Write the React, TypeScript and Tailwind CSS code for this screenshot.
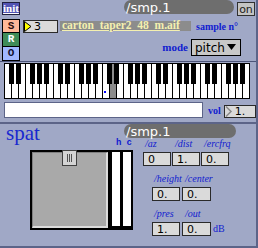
import React from "react";

const serif = { fontFamily: '"Liberation Serif", "Times New Roman", serif' };
const sans = { fontFamily: '"DejaVu Sans", "Liberation Sans", sans-serif' };
const mono = { fontFamily: '"Liberation Mono", "Courier New", monospace' };

function Keyboard() {
  const whites = Array.from({ length: 35 }, (_, i) => i);
  const blackOffsets = [5, 12, 26, 33, 40];
  const blacks: number[] = [];
  for (let o = 0; o < 5; o++) blackOffsets.forEach((b) => blacks.push(o * 49 + b));
  return (
    <svg width="246" height="36" viewBox="0 0 246 36" className="block">
      <rect x="0" y="0" width="246" height="36" fill="#ffffff" />
      <rect x="105" y="0" width="7" height="35" fill="#8c8c8c" />
      {whites.map((i) => (
        <rect key={i} x={i * 7} y="0" width="1" height="36" fill="#000" />
      ))}
      <rect x="245" y="0" width="1" height="36" fill="#000" />
      <rect x="0" y="0" width="246" height="1" fill="#000" />
      <rect x="0" y="35" width="246" height="1" fill="#000" />
      {blacks.map((x) => (
        <rect key={x} x={x} y="0" width="5" height="21" fill="#000" />
      ))}
      <rect x="100" y="28" width="2" height="2" fill="#0000ff" />
    </svg>
  );
}

function NumBox({ value, w, h = 13, arrow }: { value: string; w: number; h?: number; arrow?: "yellow" | "gray" }) {
  return (
    <div
      className="relative flex items-center border border-[#2a2a2a] bg-[#dadada] text-[11px] leading-none text-black"
      style={{ width: w, height: h, ...sans }}
    >
      {arrow === "yellow" && (
        <svg width="8" height="11" viewBox="0 0 8 11" className="absolute left-0 top-0">
          <polygon points="0.5,0.5 7,5.5 0.5,10.5" fill="#ffff00" stroke="#000" strokeWidth="1" />
        </svg>
      )}
      {arrow === "gray" && (
        <svg width="8" height="11" viewBox="0 0 8 11" className="absolute left-0 top-0">
          <polyline points="1,0.5 6,5.5 1,10.5" fill="none" stroke="#8a8a8a" strokeWidth="1.5" />
        </svg>
      )}
      <span className={arrow ? "pl-[10px]" : "pl-[4px]"}>{value}</span>
    </div>
  );
}

function Label({ children, className = "" }: { children: React.ReactNode; className?: string }) {
  return (
    <span className={`text-[10px] italic leading-none text-[#1020d0] ${className}`} style={serif}>
      {children}
    </span>
  );
}

export default function App() {
  return (
    <div className="h-[248px] w-[258px] overflow-hidden bg-[#a0a8c6]">
      {/* Top panel */}
      <div className="flex h-[124px] flex-col border-b-2 border-r-2 border-b-[#5c6488] border-r-[#5c6488]">
        <div className="flex h-[61px]">
          {/* left buttons */}
          <div className="ml-[2px] flex w-[18px] flex-col pt-[2px]">
            <div
              className="flex h-[13px] items-center justify-center border border-[#202040] bg-[#5254b4] text-[11px] font-bold leading-none text-white underline"
              style={serif}
            >
              init
            </div>
            <div className="mt-[4px] flex h-[14px] items-center justify-center border border-black bg-[#ffb898] text-[11px] font-bold leading-none text-[#301010]" style={mono}>
              S
            </div>
            <div className="flex h-[14px] items-center justify-center border border-black border-t-0 bg-[#3f8c58] text-[11px] font-bold leading-none text-white" style={mono}>
              R
            </div>
            <div className="flex h-[14px] items-center justify-center border border-black border-t-0 bg-[#a0b8ff] text-[11px] font-bold leading-none text-[#101030]" style={mono}>
              O
            </div>
          </div>
          {/* right content */}
          <div className="flex flex-1 flex-col">
            <div className="flex h-[17px] justify-end pr-[1px]">
              <div
                className="flex h-[14px] w-[110px] items-center rounded-[7px] bg-[#6e6e6e] pl-[2px] text-[13px] leading-none text-white"
                style={sans}
              >
                /smp.1
              </div>
              <div
                className="ml-[3px] mt-[2px] flex h-[14px] w-[18px] items-center justify-center border border-[#303030] bg-[#c4c4c4] text-[11px] leading-none text-[#202020]"
                style={sans}
              >
                on
              </div>
            </div>
            <div className="mt-[3px] flex items-start">
              <div className="ml-[3px]">
                <NumBox value="3" w={35} arrow="yellow" />
              </div>
              <div
                className="ml-[2px] mt-[1px] flex h-[10px] w-[131px] items-center overflow-visible whitespace-nowrap bg-[#8c8c8c] pl-[2px] text-[11.5px] font-bold leading-none text-[#f4f0b0] underline"
                style={serif}
              >
                carton_taper2_48_m.aif
              </div>
              <span className="ml-[5px] mt-[2px] text-[10px] font-bold leading-none text-[#1020d0]" style={serif}>
                sample n°
              </span>
            </div>
            <div className="mt-[6px] flex items-center justify-end pr-[15px]">
              <span className="mr-[3px] text-[11px] font-bold leading-none text-[#1020d0]" style={serif}>
                mode
              </span>
              <div
                className="relative flex h-[17px] w-[50px] items-center border border-black bg-[#c8c8c8] pl-[3px] text-[12px] leading-none text-black"
                style={sans}
              >
                pitch
                <svg width="9" height="6" viewBox="0 0 9 6" className="absolute right-[4px] top-[4px]">
                  <polygon points="0,0 9,0 4.5,6" fill="#000" />
                </svg>
              </div>
            </div>
          </div>
        </div>
        <div className="h-[1px] bg-[#4c5478]" />
        <div className="ml-[4px] mt-[1px]">
          <Keyboard />
        </div>
        <div className="mt-[3px] flex items-end">
          <div className="ml-[4px] h-[16px] w-[199px] border border-[#5c6488] bg-white" />
          <span className="mb-[2px] ml-[5px] text-[10px] font-bold leading-none text-[#1020d0]" style={serif}>
            vol
          </span>
          <div className="ml-[3px]">
            <NumBox value="1." w={32} arrow="gray" />
          </div>
        </div>
      </div>

      {/* Bottom panel */}
      <div className="flex h-[124px] flex-col border-b-2 border-r-2 border-b-[#5c6488] border-r-[#5c6488]">
        <div className="flex h-[15px] items-start">
          <span className="ml-[6px] mt-[-1px] text-[21px] leading-[21px] text-[#1828d0]" style={serif}>
            spat
          </span>
          <div
            className="ml-auto mr-[20px] flex h-[14px] w-[112px] items-center rounded-[7px] bg-[#6e6e6e] pl-[2px] text-[13px] leading-none text-white"
            style={sans}
          >
            /smp.1
          </div>
        </div>
        <div className="flex">
          {/* pad + sliders */}
          <div className="ml-[30px] flex flex-col">
            <div className="flex h-[11px]">
              <div className="w-[80px]" />
              <span className="ml-[6px] text-[9px] font-bold leading-none text-[#1020d0]" style={mono}>h</span>
              <span className="ml-[5px] text-[9px] font-bold leading-none text-[#1020d0]" style={mono}>c</span>
            </div>
            <div className="flex">
              <div className="relative h-[80px] w-[80px] border-2 border-black bg-[#a9a9a9]">
                <div className="h-full w-full border-b-2 border-r-2 border-b-[#dcdcdc] border-r-[#dcdcdc] border-l border-t border-l-[#808080] border-t-[#808080]" />
                <div className="absolute left-[30px] top-[-2px] flex h-[16px] w-[15px] items-center justify-center gap-[1px] border border-[#404040] bg-[#d4d4d4]">
                  <div className="h-[8px] w-[1px] bg-[#505050]" />
                  <div className="h-[8px] w-[1px] bg-[#505050]" />
                  <div className="h-[8px] w-[1px] bg-[#505050]" />
                </div>
              </div>
              <div className="h-[80px] w-[12px] border-2 border-b-[4px] border-black bg-white" />
              <div className="ml-[-1px] h-[80px] w-[12px] border-2 border-b-[4px] border-black bg-white" />
            </div>
          </div>
          {/* number boxes */}
          <div className="ml-[10px] flex flex-col">
            <div className="flex">
              <div className="flex w-[29px] flex-col">
                <Label className="ml-[2px]">/az</Label>
                <div className="mt-[3px]"><NumBox value="0" w={28} h={14} /></div>
              </div>
              <div className="flex w-[29px] flex-col">
                <Label className="ml-[3px]">/dist</Label>
                <div className="mt-[3px]"><NumBox value="1." w={28} h={14} /></div>
              </div>
              <div className="flex w-[29px] flex-col">
                <Label className="ml-[3px]">/ercfrq</Label>
                <div className="mt-[3px]"><NumBox value="0." w={28} h={14} /></div>
              </div>
            </div>
            <div className="ml-[9px] mt-[8px] flex">
              <div className="flex w-[30px] flex-col">
                <Label className="ml-[2px]">/height</Label>
                <div className="mt-[3px]"><NumBox value="0." w={28} h={14} /></div>
              </div>
              <div className="flex w-[30px] flex-col">
                <Label className="ml-[3px]">/center</Label>
                <div className="mt-[3px]"><NumBox value="0." w={29} h={14} /></div>
              </div>
            </div>
            <div className="ml-[9px] mt-[8px] flex items-end">
              <div className="flex w-[30px] flex-col">
                <Label className="ml-[2px]">/pres</Label>
                <div className="mt-[3px]"><NumBox value="1." w={28} h={14} /></div>
              </div>
              <div className="flex w-[30px] flex-col">
                <Label className="ml-[3px]">/out</Label>
                <div className="mt-[3px]"><NumBox value="0." w={29} h={14} /></div>
              </div>
              <span className="mb-[2px] ml-[1px] text-[10px] leading-none text-[#1020d0]" style={serif}>dB</span>
            </div>
          </div>
        </div>
      </div>
    </div>
  );
}
